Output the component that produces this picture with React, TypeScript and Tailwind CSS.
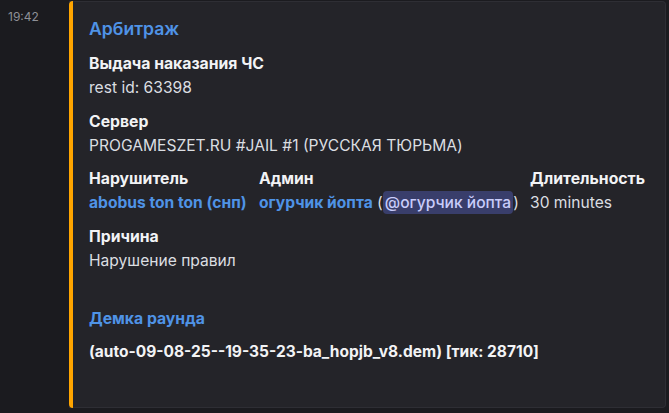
import { FC, ReactNode } from 'react';

const font = { fontFamily: 'Inter, "Noto Sans", sans-serif' };

interface FieldProps {
  name: string;
  children: ReactNode;
}

// Single embed field: bold name over a value line
const Field: FC<FieldProps> = ({ name, children }) => (
  <div>
    <div className="text-[15.75px] leading-[20px] font-bold text-[#f2f3f5] mb-[3px]">{name}</div>
    <div className="text-[15.6px] leading-[22px] text-[#dbdee1] whitespace-nowrap">{children}</div>
  </div>
);

const App: FC = () => {
  return (
    <div className="w-[669px] h-[413px] bg-[#1b1b1f] overflow-hidden flex" style={font}>
      <div className="w-[69px] shrink-0 pl-[8px] pt-[9px] text-[12px] leading-[16px] text-[#8e9097]">19:42</div>
      <div className="mt-[1px] w-[597px] h-[407px] bg-[#242429] border border-l-0 border-[#2e2e34] rounded-r-[4px] flex">
        <div className="w-[4px] bg-[#ffa500] rounded-l-[4px] -my-px"></div>
        <div className="pl-[16px] pt-[16px] flex flex-col">
          <div className="text-[17.6px] leading-[22px] font-semibold text-[#4f93e6]">Арбитраж</div>

          <div className="mt-[14px] flex flex-col gap-[13px]">
            <Field name="Выдача наказания ЧС">rest id: 63398</Field>
            <Field name="Сервер">PROGAMESZET.RU #JAIL #1 (РУССКАЯ ТЮРЬМА)</Field>

            <div className="grid grid-cols-[170px_271px_auto] -mt-px">
              <Field name="Нарушитель">
                <span className="font-bold text-[#4f93e6]">abobus ton ton (снп)</span>
              </Field>
              <Field name="Админ">
                <span className="font-bold text-[#4f93e6]">огурчик йопта</span>
                {' ('}
                <span className="bg-[#393e6b] text-[#c9cdfb] rounded-[4px] px-[2px] py-[2px] font-medium">@огурчик йопта</span>
                {')'}
              </Field>
              <Field name="Длительность">30 minutes</Field>
            </div>

            <Field name="Причина">Нарушение правил</Field>
          </div>

          <div className="mt-[37px] text-[15.75px] leading-[20px] font-bold text-[#4f93e6]">Демка раунда</div>
          <div className="mt-[12px] text-[15.5px] leading-[22px] font-bold text-[#f2f3f5] whitespace-nowrap">
            (auto-09-08-25--19-35-23-ba_hopjb_v8.dem) [тик: 28710]
          </div>
        </div>
      </div>
    </div>
  );
};

export default App;
